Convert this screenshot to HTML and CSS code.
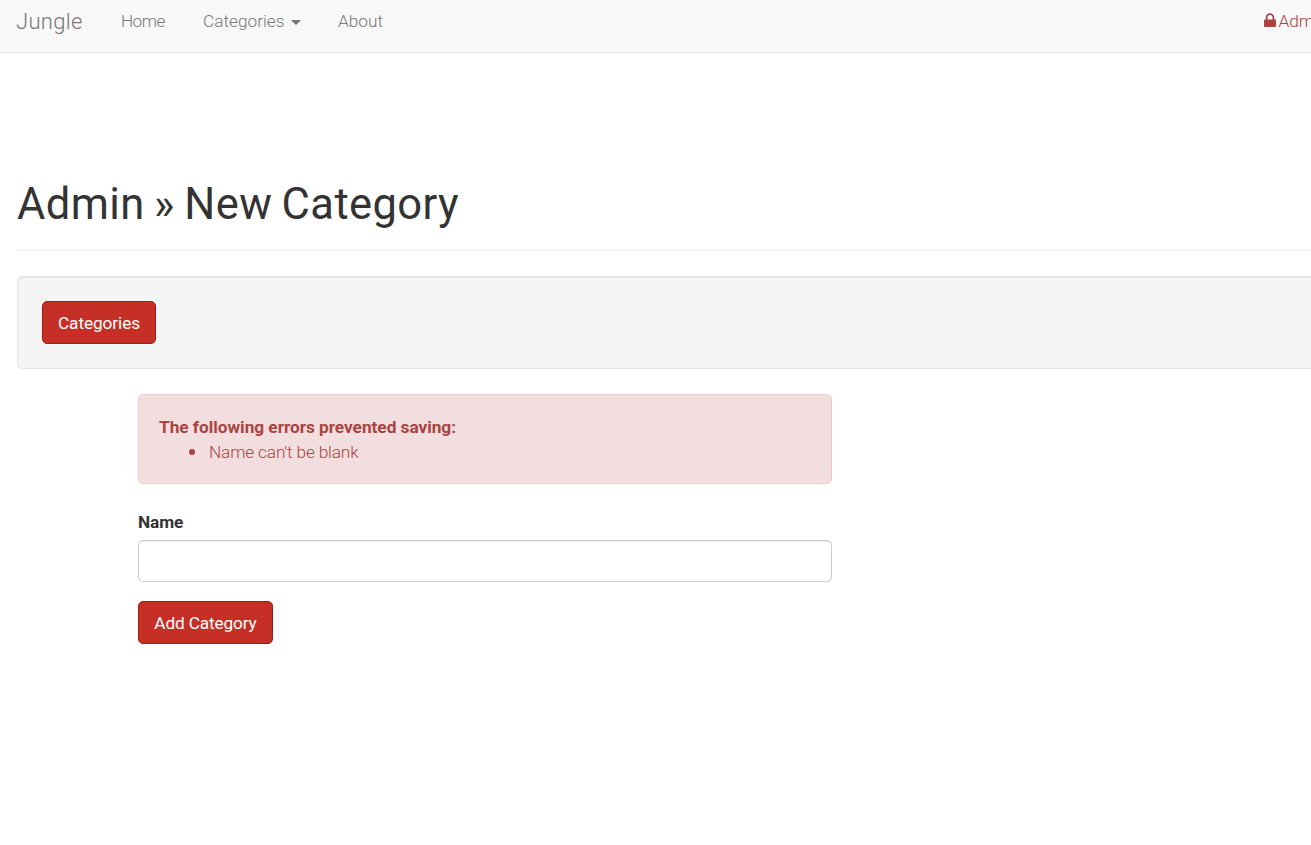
FILE: index.html
```html
<!DOCTYPE html>
<html lang="en">
<head>
<meta charset="utf-8">
<title>Jungle</title>
<link rel="stylesheet" href="styles.css">
</head>
<body>
<nav class="navbar">
  <a class="brand">Jungle</a>
  <a class="nav-home">Home</a>
  <a class="nav-categories">Categories</a><span class="caret"></span>
  <a class="nav-about">About</a>
  <a class="admin-link"><svg class="lock" viewBox="0 0 12 15"><path fill="currentColor" fill-rule="evenodd" d="M1.7 6.500V4.500a4.300 4.300 0 0 1 8.600 0v2h.7q1 0 1 1V13q0 1-1 1H1q-1 0-1-1V7.500q0-1 1-1zM3.500 6.500h5V4.500a2.500 2.500 0 0 0-5 0z"/></svg><span>Admin</span></a>
</nav>
<main class="page">
  <header class="page-header"><h1>Admin » New Category</h1></header>
  <div class="well"><a class="btn btn-list">Categories</a></div>
  <form class="category-form">
    <div class="alert">
      <strong class="alert-title">The following errors prevented saving:</strong>
      <ul class="alert-list"><li>Name can't be blank</li></ul>
    </div>
    <label class="label" for="name">Name</label>
    <input class="field" id="name" type="text">
    <button class="btn btn-add" type="button">Add Category</button>
  </form>
</main>
</body>
</html>
```
FILE: styles.css
```css
* { box-sizing: border-box; }
html { overflow: hidden; }
body {
  margin: 0;
  overflow: hidden;
  background: #fff;
  color: #333;
  font: 300 17.25px/25px Roboto, sans-serif;
}
.navbar {
  display: flex;
  align-items: flex-start;
  width: 1345px;
  height: 53px;
  padding: 9px 17px 0;
  background: #f8f8f8;
  border-bottom: 1px solid #e7e7e7;
  color: #777;
  white-space: nowrap;
}
.brand { width: 104px; font-size: 22px; letter-spacing: .3px; margin-left: -1px; margin-right: 1px; }
.nav-home { width: 82px; letter-spacing: -.6px; }
.nav-categories { width: 88px; }
.caret {
  width: 10px;
  margin-top: 11px;
  border: 5px solid transparent;
  border-top-color: #777;
  border-bottom: 0;
}
.nav-about { margin-left: 37px; }
.admin-link { display: flex; gap: 3px; margin-left: auto; width: 64.5px; color: #a94442; }
.lock { width: 12px; height: 15px; margin-top: 4px; }
.page { width: 1345px; padding: 123px 17px 0; }
.page-header { height: 75px; border-bottom: 1px solid #eee; }
h1 {
  margin: 0;
  font-size: 43.5px;
  line-height: 58px;
  font-weight: 400;
  letter-spacing: .4px;
  word-spacing: -1.8px;
}
.well {
  height: 93px;
  margin-top: 25px;
  padding: 24px;
  background: #f4f4f4;
  border: 1px solid #e3e3e3;
  border-radius: 5px;
  box-shadow: inset 0 1px 1px rgba(0, 0, 0, .05);
}
.btn {
  display: block;
  height: 43px;
  padding: 0;
  background: #c62f25;
  border: 1px solid #9c2018;
  border-radius: 5px;
  color: #fff;
  font: 400 17.25px/42px Roboto, sans-serif;
  letter-spacing: -.1px;
  text-align: center;
  white-space: nowrap;
}
.btn-list { width: 114px; }
.btn-add { width: 135px; margin-top: 19px; letter-spacing: -.15px; }
.category-form { width: 694px; margin: 25px 0 0 121px; }
.alert {
  height: 90px;
  padding: 20px;
  background: #f2dede;
  border: 1px solid #ebccd1;
  border-radius: 5px;
  color: #a94442;
}
.alert-title { display: block; font-weight: 700; letter-spacing: -.03px; }
.alert-list { margin: 0; padding-left: 50px; list-style: none; letter-spacing: -.17px; }
.alert-list li::before {
  content: "";
  display: inline-block;
  width: 6px;
  height: 6px;
  margin: 0 14px 3px -20px;
  border-radius: 50%;
  background: currentColor;
}
.label { display: block; width: max-content; margin: 26px 0 0; font-weight: 700; letter-spacing: -.1px; }
.field {
  display: block;
  width: 100%;
  height: 42px;
  margin-top: 5px;
  padding: 8px 16px;
  background: #fff;
  border: 1px solid #ccc;
  border-radius: 5px;
  box-shadow: inset 0 1px 1px rgba(0, 0, 0, .075);
  font: inherit;
}
```
